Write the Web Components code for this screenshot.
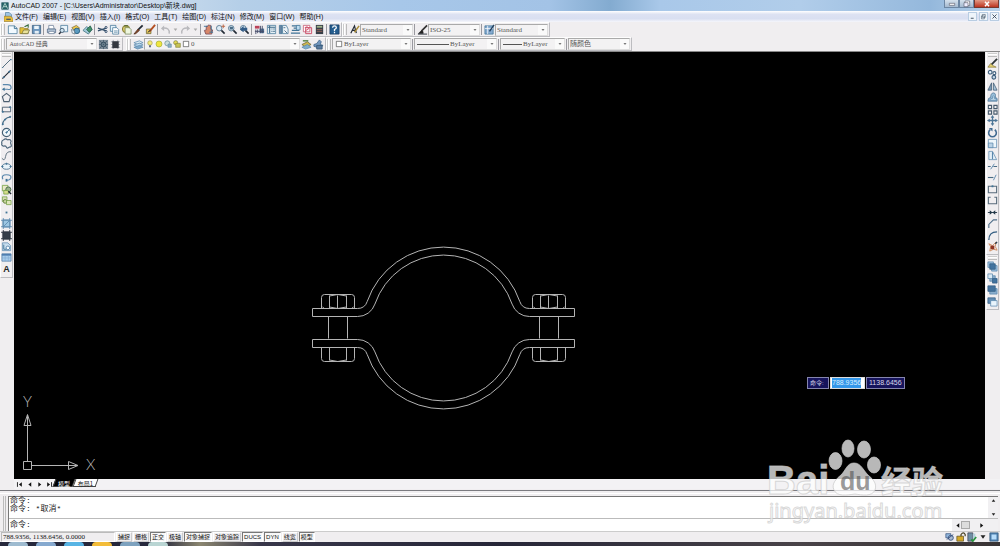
<!DOCTYPE html>
<html lang="zh-CN">
<head>
<meta charset="utf-8">
<title>AutoCAD 2007</title>
<style>
html,body{margin:0;height:100%}
body{font:7px/9px "Liberation Sans","Noto Sans CJK SC",sans-serif;color:#222;background:#f0eef0;overflow:hidden}
</style>
</head>
<body>
<cad-app></cad-app>
<script>
const define = (name, css, html, setup) => {
  const tpl = document.createElement('template');
  customElements.define(name, class extends HTMLElement {
    constructor() {
      super();
      tpl.innerHTML = `<style>*{box-sizing:border-box}button{font:inherit;color:inherit;background:none;border:0;padding:0;margin:0;display:flex;align-items:center;justify-content:center}:host([hidden]){display:none}${css}</style>` + (typeof html === 'function' ? '' : html);
      this.attachShadow({mode: 'open'}).append(tpl.content.cloneNode(true));
      if (typeof html === 'function') this.render = html;
    }
    connectedCallback() {
      if (this.render && !this.done) {
        const t = document.createElement('template');
        t.innerHTML = this.render(this);
        this.shadowRoot.append(t.content.cloneNode(true));
        this.done = true;
      }
      if (setup) setup(this);
    }
  });
};

/* Icon shapes on a 12 x 12 grid. p = stroked path, f = filled path. */
const p = (d, c = '#34506e', w = 1) => `<path d="${d}" fill="none" stroke="${c}" stroke-width="${w}"/>`;
const f = (d, c, s = 'none') => `<path d="${d}" fill="${c}" stroke="${s}" stroke-width=".8"/>`;
const o = (x, y, r, c = 'none', s = '#34506e', w = 1) => `<circle cx="${x}" cy="${y}" r="${r}" fill="${c}" stroke="${s}" stroke-width="${w}"/>`;
const B = '#3f7396', L = '#bfdcf0', Y = '#e6c238', G = '#6f9d3c', K = '#222a35', M = '#5b88ad';
const lens = o(4.6,4.6,3,'#dcebf5','#5c7c94') + p('M7 7l3.5 3.5', K, 1.8);
const icons = {
  new: f('M1.500 2h6.500l3 2.500v6h-9.500z','#f2f9ff',B) + p('M8 2v3h3',B),
  open: f('M1 4h4l1 1h4v5.500h-9z',Y,'#8b792c') + f('M3 10.500l2-4h6.500l-2 4z','#e9e29a','#6c6a3b') + p('M6 3l4-2v3','#356b3a',1.200),
  save: f('M1.500 1.500h9v9h-9z','#6b95bd','#35597c') + f('M3.500 2h5v3.500h-5z','#edf5fb') + f('M4 7.500h4.500v3h-4.500z','#e3edf5'),
  print: f('M3 1.500h5l1 4h-6z','#fff','#667894') + f('M1.500 5.500h9v4h-9z','#b7c7d9','#4d6482') + f('M3 8h6v2.500h-6z','#fff','#667894'),
  preview: f('M3 1.500h7.500v7h-7.500z','#e9f4fb',B) + o(4.500,7,2.300,'#cfe3ef','#465e75') + p('M3 9l-2 2',K,1.500),
  publish: f('M2 4l5-2.500 3.500 3-5 3z','#efc94c','#77652b') + o(7.500,7.500,3,'#5a9ac0','#285f80') + f('M1.500 6l3 1 1 4-3-1z','#e9f1f6','#647683'),
  sphere: f('M1 7l4-4 6 3-4 5z','#a3c9da','#386b77') + f('M5 6l4-4 2 4-3 3z','#43906c','#1e5943'),
  cut: p('M1 4.500l9 3M1 7.500l9-3','#35506b',1.200) + o(9.800,3.800,1.200) + o(9.800,8.200,1.200),
  copy: f('M1.500 1.500h6v6.500h-6z','#e7f3fb',B) + f('M4 4h4.500l2 2v5h-6.500z','#fff',B) + p('M5.500 7.500h4M5.500 9h4',B,.7),
  paste: o(5.500,5.500,4,'#dac96a','#77722e') + f('M4.500 4h4.500l2 2v5h-6.500z','#eef6df','#728257') + p('M3.500 2h4','#596b35',1.500),
  brush: p('M10.500 1.500l-5 5',K,2) + f('M5.500 5.500l1.500 1.500-4 3.500-2 .500z','#8a4e2c','#4c2b1d'),
  edit: f('M1.500 5.500h5v5h-5z','#e4c65c','#6b6333') + p('M11 1l-6 7','#b34e21',2) + p('M3 9l3-2',K,1),
  undo: p('M10 10.500q1-7-7.500-6','#b9b9bd',1.500) + f('M1 5l3.500-3.500v6z','#b9b9bd'),
  redo: p('M2 10.500q-1-7 7.500-6','#b9b9bd',1.500) + f('M11 5l-3.500-3.500v6z','#b9b9bd'),
  caret: f('M4 5h4l-2 2.500z','#aaa'),
  down: f('M3 4h6l-3 4z','#777'),
  pan: f('M3 11l-1.500-4 2-.500 0-4 1.500 0 1-1.500 1.500.500 1 0v4l2 1-1 4.500z','#d8876a','#6c4251') + p('M1 2.500h4M9 2v7M7 9h4',B,1),
  zoomrt: lens + p('M9 .500v4M7 2.500h4','#b86342',1),
  zoomwin: lens + f('M3 3h3.500v3h-3.500z','#4a6c86'),
  zoomprev: lens + f('M1 6l4-4v2h4v3h-4v2z','#345c87'),
  props: f('M1 2h5v3h-5z','#bb4259') + f('M6 5h5v5h-5z','#4e7193') + p('M2 6v5M4 6v4M7 2v8M9 2v8M1 8h10','#444a68',1),
  centre: f('M1.500 1.500h9v9h-9z','#e6f0f6',B) + p('M4 2v8M2 3.500h8M6 5.500h1M8 5.500h1.500M6 8h1M8 8h1.500','#3d6785',1.200),
  palette: f('M1.500 1.500h3v9h-3z','#6886a4',B) + f('M5 1.500h4l2 4v5h-6z','#edf3f7',B) + p('M6 4h2M7 7l3 3','#4b6e8a'),
  sheets: p('M2 2h8M4 4.500h7M2 7h8M1 10h10',B,1.200) + f('M7 1.500h4v5h-4z',L,B),
  markup: f('M1.500 1.500h7v7h-7z','#fff','#c34f69') + p('M4 4h6.500v6.500h-6.500zM3 4q3-2 4 0t-3 3','#cc4864'),
  calc: f('M2 1h8v10h-8z','#383f48') + f('M3 2h6v2h-6z','#9fb389') + p('M3 6h6M3 8h6','#a96c5d',.8),
  help: f('M1 1h10v10h-10z','#245d8e','#173a60') + p('M4 4q0-2 2-2t2 2q0 1-2 2v1.500M6 8.500v1.500','#fff',1.400),
  textstyle: p('M2 10l4-8 2 8M3 7h4',K,1.300) + p('M11 2l-5 7','#a88c38',1.600),
  dimstyle: p('M11 1.500l-6 6','#333',1.800) + f('M1 10.500l4-4 2 2v2z','#222') + p('M1 11h10',K,1),
  tablestyle: f('M1 2h9v9h-9z','#85aad0',B) + p('M1 5h9M4 2v9','#fff',.8) + p('M11 1l-5 7','#23405d',1.500),
  gear: f('M1 1h10v10h-10z','#7b8a97') + o(6,6,2.500,'#d7e3e8','#2e4658') + p('M6 1v10M1 6h10M2 2l8 8M10 2l-8 8','#3f5567',.8),
  workspace: p('M1 3h10M1 6h10M1 9h10M3.500 1v10M8.500 1v10','#8c939d',.8) + f('M2.500 2.500h7v7.500h-7z','#343840'),
  layers: f('M1 4l6-2 4 2-6 2z','#dcebf3',M) + f('M1 6.500l6-2 4 2-6 2z',L,M) + f('M1 9l6-2 4 2-6 2z','#7da8c9',M),
  bulb: o(6,4.500,3.400,'#f5ec7a','#a69d4a') + f('M4.500 8h3v3h-3z','#687184'),
  sun: o(6,6,4.500,'#f0e53e','#9eac37'),
  freeze: o(5,5,3.800,'#cbdedc','#63868f') + f('M6 6h5v5h-5z','#8eb0be',M),
  lock: o(4,4,3,'#e8dd54','#767c36') + f('M4 5h7v6h-7z','#c7c455','#76752e'),
  square: f('M2 2h8v8h-8z','#fff','#222'),
  layerprev: f('M1 6l6-3 4 3-6 3z','#d1b94a','#675f35') + f('M1 9l6-3 4 3-6 2z','#7eadc9',M) + p('M2 2h6','#4f7d3c',1.500),
  layerstate: f('M1 6l3-1 3-4 2 2-1 3 3 1-4 3-6-2z','#7196be','#375d84') + f('M4 7h6v4h-6z','#587a9f','#33526d'),
  line: p('M1.500 10.500l9-9','#486174',1) + f('M1 10h1.500v1h-1.500zM10 1h1.500v1.500h-1.500z',B),
  xline: p('M1.500 10.500l9-9',K,1.200) + o(3,9,.6,B,B) + o(9,3,.6,B,B),
  pline: p('M2 4h5q4 0 4 3t-4 2H2',M,1.300) + f('M1 9l3-2v4z',B),
  polygon: p('M6 1.500l4.500 3.500-1.700 5.500h-5.600l-1.700-5.500z','#4b5e70',1.200),
  rect: p('M1.500 3.500h9v5h-9z','#4b5e70') + o(2,8.500,.7,B,B) + o(10,3.500,.7,B,B),
  arc: p('M1.500 11q1-8 9-9','#4b6e86',1.200) + o(2,10,.6,B,B) + o(4.500,5,.6,B,B) + o(10,2,.6,B,B),
  circle: o(6,6,4.500,'#eff7fb','#425d72',1.200) + p('M6 6l3-3',B) + o(6,6,.7,B,B),
  cloud: p('M3 2q2-2 4 0 4-1 4 2-1 1 0 3 1 3-2 3-2 2-3 0-1-2-3-1-3-1-2-3-1-3 2-4z','#476176',1.200),
  spline: p('M1 9q3 4 4-2t6-5','#596b78'),
  ellipse: '<ellipse cx="6" cy="6" rx="4.500" ry="3" fill="#e8f3f9" stroke="#4f7391"/>' + o(6,3,.6,B,B) + o(1.500,6,.7,B,B) + o(10.500,6,.7,B,B),
  ellarc: p('M2 8q-2-5 4-5t4.500 4q-1 2-5 2',M,1.300) + f('M5 7.500h2v3h-2z',B),
  insert: f('M1.500 1.500h6v6h-6z','#e8e8c7',G) + o(8,6,2.800,'#9ab38b','#466846') + f('M3 7h5v4h-5z','#d5dc8c',G) + p('M8 8l3 3',K,1.500),
  block: f('M1.500 2h5v5h-5z','#d5ddb5',G) + o(4.500,7,2,'#c9d8a2','#617b3d') + f('M6 6h5v4.500h-5z','#dfe5bd',G),
  point: f('M5 5h2v2h-2z',B),
  hatch: f('M2 2h8v8h-8z','#9cc6e2',M) + p('M2.500 0v12M9.500 0v12M0 2.500h12M0 9.500h12M3 9l6-6',M,.9),
  gradient: f('M2 2h8v8h-8z','#343d49','#1e2835') + p('M2.500 0v12M9.500 0v12M0 2.500h12M0 9.500h12','#323b47',1),
  region: f('M1.500 2h6l3 3v5.500h-9z','#c9dfef',M) + o(7.500,7.500,2,'#f4faff',M) + p('M3 4v5h3',B),
  table: f('M1 2h10v8h-10z','#a8cdec','#517ba4') + f('M1 2h10v2h-10z','#4f7eb0') + p('M1 6.500h10M4.500 4v6M8 4v6','#7da6cf',.6),
  erase: p('M11 1l-7 7','#2e3436',2) + f('M1 10l3-4 2 2 4 2z','#e1cf73','#8f7e3a'),
  copyobj: o(3.500,3.500,2,'#eaf5fc','#3f5f7d',1.200) + o(8,4.500,1.600,'#fff','#3f5f7d',1.200) + o(7.500,9,2,'#c4d8e8','#3f5f7d',1.200),
  mirror: f('M5 2v8h-4z','#7c9cb7','#3b5670') + f('M7 2v8h4z','#a8c4d8','#3b5670'),
  offset: f('M1 10q0-4 3-4 0-5 3-5t2 5q3 0 2 4z','#9abfd9','#466f91') + f('M3 9q0-2 3-2 0-3 1-3t1 3h2v2z','#c9e0ee',M),
  array: p('M1.500 1.500h3.500v3.500h-3.500zM7.500 1.500h3.500v3.500h-3.500zM1.500 7.500h3.500v3.500h-3.500zM7.500 7.500h3.500v3.500h-3.500z','#46596b',1.200),
  move: p('M6 2v8M2 6h8','#4d7596',1.400) + f('M6 0l2 3h-4zM6 12l2-3h-4zM0 6l3-2v4zM12 6l-3-2v4z','#4d7596'),
  rotate: p('M3.500 3a4.200 4.200 0 1 0 5 0','#416a91',1.700) + f('M2 1h4v4z','#416a91'),
  scale: f('M1.500 1.500h9v9h-9z','#eef7fc',M) + f('M1.500 5.500h5v5h-5z','#b9d2e6',M),
  stretch: f('M2 10.500v-9h4l4.500 9z','#e3eff7',M) + p('M6 2v8',M,1.200),
  trim: p('M1 6h3M7 6h4','#486a83',1.200) + p('M4 9l4-6',M),
  extend: p('M1 6h6','#486a83',1.200) + p('M7 9l3-6',M),
  breakpt: p('M1.500 2.500h9v7h-9z','#586b7b',1.200) + f('M5 1.500h2v2h-2z',B),
  break: p('M4 2.500h-2.500v7h9v-7h-2.500','#586b7b',1.200),
  join: p('M1 6h10','#213747',1) + f('M6 6l-3-2.500v5zM6 6l3-2.500v5z','#213747'),
  chamfer: p('M2 11v-4l5-5h4','#4e6e88',1.200),
  fillet: p('M2 11q0-9 9-9','#355f83',1.400),
  explode: p('M2 3l4 2 4-4-1 5 2 4-4-1-4 2 1-5z','#d08a5c',1) + f('M4 5h4v4h-4z','#8d3424') + p('M9 3l2-2','#233d52',1.500),
  front: f('M1 1h6v6h-6z','#9fc2df',M) + f('M5 5h6v6h-6z','#9fc2df',M) + f('M3 3h6v6h-6z','#42739f','#335d84'),
  back: f('M3 3h6v6h-6z','#8cafcc',M) + f('M1 1h5v5h-5z','#d9e9f4',M) + f('M6 6h5v5h-5z','#42739f','#335d84'),
  above: f('M3 5h8v6h-8z','#8aaecd',M) + f('M1 2h8v6h-8z','#44739e','#335d84'),
  under: f('M1 2h8v6h-8z','#638eb5','#335d84') + f('M4 5h7v6h-7z','#e9f4fc',M),
  first: p('M2.500 2v8','#111',1.500) + f('M10 2v8l-5-4z','#111'),
  prev: f('M9 2v8l-5-4z','#111'),
  next: f('M4 2v8l5-4z','#111'),
  last: p('M9.500 2v8','#111',1.500) + f('M2 2v8l5-4z','#111'),
  up: f('M3 8h6l-3-4z','#222'),
  dn: f('M3 4h6l-3 4z','#222'),
  min: f('M2 5h8v3h-8z','#fff','#445'),
  max: f('M3 1.500h7v7h-7z','#fff','#445') + f('M1.500 4h6v6h-6z','#eef','#445'),
  close: p('M3 2.500l6 7M9 2.500l-6 7','#fff',2.200),
  mmin: p('M3 9h5','#345',1.500),
  mmax: p('M4 2.500h5v5h-5zM2.500 5h5v5h-5z','#456'),
  mclose: p('M2.500 2.500l7 7M9.500 2.500l-7 7','#345',1.500),
  app: f('M1 1h10v10h-10z','#27666a','#164b53') + p('M2 10l4-8 4 8M4 7h5','#c5e2db',1.200),
  doc: f('M2 0h5l3 3v5h-8z','#9ec4e4',B) + f('M0 5h9l3 3v4h-12z','#e8bd3b','#8f7429') + p('M3 9h6','#2f4766',1.500),
  comm: f('M1 2h6v5h-6z','#91b4da','#2f4b79') + o(7,7,3,'#aabbd0','#2f4b79') + p('M2 9l8-6','#2f4b79'),
  unlock: p('M6 6v-3q3-4 5 0v2','#443d1d',1.400) + f('M1 5h8v6h-8z','#d5a929','#544821'),
  tray: f('M1 1h6v10h-6z','#6e8fa4','#334') + f('M7 2h3v6h-3z','#b5d2dd') + p('M5 9l2 2 4-5','#28953d',2),
  clean: f('M1 1h10v10h-10z','#4e80b0','#315778') + f('M3 3h6v6h-6z','#b7ddfb'),
};

define('cad-icon', `:host{display:block;width:10px;height:10px;flex:none}svg{display:block;width:100%;height:100%}`,
  el => `<svg viewBox="0 0 12 12" aria-hidden="true">${icons[el.getAttribute('name')]}</svg>`);

/* A push button holding one icon. */
define('tool-button', `:host{display:block;flex:none;width:var(--tool-w,12px);height:var(--tool-h,12px)}
  :host([small]){width:8px}button{width:100%;height:100%}cad-icon{width:11px;height:11px}`,
  el => `<button type="button" aria-label="${el.getAttribute('name')}"><cad-icon name="${el.getAttribute('name')}"></cad-icon></button>`);

const tools = names => names.split(' ').map(n => n === '|' ? '<i></i>' : `<tool-button name="${n}"${n === 'caret' ? ' small' : ''}></tool-button>`).join('');

/* Dockable toolbar: a grip, then a run of tools and combo boxes. */
define('tool-bar', `:host{display:flex;align-items:center;height:15px;flex:none;border:1px solid;border-color:#fdfdfd #bcbcc0 #bcbcc0 #fdfdfd;padding-right:1px}
  .grip{width:3px;height:11px;margin:0 1px;flex:none;border:1px solid;border-color:#fff #bbb #bbb #fff;border-width:0 1px;box-shadow:-1px 0 #ccc}
  :host([vertical]){flex-direction:column;width:13px;height:auto;padding:0 0 2px;border-top-width:0}
  :host([vertical]) .grip{width:9px;height:3px;margin:2px 0 0;border-width:1px 0;box-shadow:0 -1px #ccc}
  :host([vertical]) .run{flex-direction:column;height:var(--run);justify-content:space-between;margin-top:1px}
  .run{display:flex;align-items:center}
  i{width:1px;height:11px;margin:0 1px;background:#99999f}`,
  el => `<span class="grip"></span><div class="run">${el.hasAttribute('tools') ? tools(el.getAttribute('tools')) : ''}<slot></slot></div>`);

define('bar-split', `:host{display:block;width:1px;height:11px;margin:0 1px;background:#99999f;flex:none}`, '');

/* Combo box with optional swatches before the value. */
define('combo-box', `:host{display:flex;align-items:center;height:12px;flex:none;width:var(--w);background:#f3f2f3;border:1px solid;border-color:#aaa #ddd #ddd #aaa;color:#555}
  select{appearance:none;flex:1;min-width:0;height:10px;border:0;background:none;padding:0 0 0 1px;margin:0;color:inherit;font:7px/10px "Liberation Serif","Noto Sans CJK SC",serif;text-overflow:clip}
  :host([compact]) select{font-size:6px}
  span{display:flex;width:9px;height:10px;background:#fafafa;align-items:center;justify-content:center;flex:none}
  span cad-icon{width:6px;height:6px}`,
  el => `<slot></slot><select aria-label="${el.getAttribute('label')}"><option>${el.getAttribute('value')}</option></select><span><cad-icon name="down"></cad-icon></span>`);

define('title-bar', `:host{display:flex;height:11px;flex:none;align-items:center;padding-left:1px;gap:2px;color:#111;font:7px/10px "Liberation Sans","Noto Sans CJK SC",sans-serif;
    background:linear-gradient(90deg,#e3ecf5 0,#cfdeee 14%,#b5cfe8 24%,#a7c7e9 40%,#a3c3e6 55%,#83abd0 61%,#a9c8e9 66%,#b1cdea 80%,#94b8dc 93%,#b9d2ea)}
  cad-icon{width:8px;height:8px}h1{font:inherit;margin:0;flex:1;white-space:nowrap}
  div{display:flex;align-self:flex-start;height:8px;margin-right:1px}
  button{width:15px;height:8px;border:1px solid #6c86a3;border-top:0;background:linear-gradient(#d5e1ed,#a5bad0)}
  .x{width:25px;background:linear-gradient(#e29a86,#bd3420);border-color:#76392f}`,
  `<cad-icon name="app"></cad-icon><h1>AutoCAD 2007 - [C:\\Users\\Administrator\\Desktop\\新块.dwg]</h1>
  <div><button aria-label="最小化"><cad-icon name="min"></cad-icon></button><button aria-label="还原"><cad-icon name="max"></cad-icon></button><button class="x" aria-label="关闭"><cad-icon name="close"></cad-icon></button></div>`);

define('menu-bar', `:host{display:flex;height:11px;flex:none;align-items:center;padding:0 1px 0 4px;background:linear-gradient(#fff,#dde2f2 30%,#d9dff1 70%,#f5f6fb);color:#111}
  nav{display:flex;gap:5px;flex:1;margin-left:2px}nav button{white-space:nowrap;line-height:10px}
  cad-icon{width:9px;height:10px}.mdi{display:flex;gap:2px}.mdi button{width:9px;height:9px;border:1px solid #b9cde2;background:#eef4fa}.mdi cad-icon{width:7px;height:7px}`,
  `<cad-icon name="doc"></cad-icon><nav>${['文件(F)','编辑(E)','视图(V)','插入(I)','格式(O)','工具(T)','绘图(D)','标注(N)','修改(M)','窗口(W)','帮助(H)'].map(t => `<button type="button">${t}</button>`).join('')}</nav>
  <div class="mdi"><button aria-label="最小化"><cad-icon name="mmin"></cad-icon></button><button aria-label="还原"><cad-icon name="mmax"></cad-icon></button><button aria-label="关闭"><cad-icon name="mclose"></cad-icon></button></div>`);

/* Model space: pipe clamp, UCS symbol and the dynamic input at the cursor. */
const head = x => `<path d="M${x} 308.500v-11q0-3 3-3h27q3 0 3 3v11M${x+8} 308.500v-13M${x+16} 308.500v-13M${x+25} 308.500v-13M${x+8} 296q8-3 17 0M${x+8} 307q8 3 17 0M${x+1} 307l2 1.500M${x+32} 307l-2 1.500"/>
  <path d="M${x} 347.500v11q0 3 3 3h27q3 0 3-3v-11M${x+8} 347.500v13M${x+25} 347.500v13M${x+8} 360q8 3 17 0M${x+7} 316.500v22M${x+26} 316.500v22"/>`;
const half = 'M312.500 308.500H357.500A10.200 10.200 0 0 0 367.200 301.500A80.700 80.700 0 0 1 519.800 301.500A10.200 10.200 0 0 0 529.500 308.500H574.500V316.500H529.500A18.200 18.200 0 0 1 512.100 304.100A72.500 72.500 0 0 0 374.900 304.100A18.200 18.200 0 0 1 357.500 316.500H312.500Z';
define('model-space', `:host{display:block;position:relative;overflow:hidden;background:#000;flex:1;min-width:0}
  svg{position:absolute;left:0;top:0;width:971px;height:427px}
  .lines{fill:none;stroke:#b4b4b4;stroke-width:1}
  text{font:300 15px Lato,sans-serif;fill:#bbb}
  form{position:absolute;left:793px;top:325px;display:flex;gap:1px;font:7px/10px "Liberation Sans","Noto Sans CJK SC",sans-serif;color:#d8d8ea}
  label,.y,.x{height:12px;border:1px solid #8585ae;background:#16145c;display:block}
  label{width:22px;padding-left:2px;font-size:6px}.x{background:#fff;width:35px;padding:0 0 0 1px;border-color:#ddd}.y{width:39px}
  input{display:block;border:0;margin:0;padding:0;height:10px;font:inherit;color:#d9efff;background:#3598ea;width:29px}
  .y input{background:none;width:37px;padding-left:2px;color:#d8d8ea}`,
  `<svg viewBox="14 52 971 427" role="img" aria-label="管夹图形"><g class="lines"><path d="${half}"/><path d="${half}" transform="matrix(1 0 0 -1 0 656)"/>${head(321.5)}${head(532.5)}
  <path d="M23.500 461.500h8v8h-8zM27.500 461V415M24 425.500h7l-3.500-11zM27.500 415v10M32 465.500h45M68.500 461.500v8l9.500-4z"/></g><text x="23" y="407">Y</text><text x="86" y="470">X</text></svg>
  <form><label for="dx">命令:</label><div class="x"><input id="dx" value="788.9356"></div><div class="y"><input aria-label="Y" value="1138.6456"></div></form>`);

define('layout-tabs', `:host{display:flex;height:10px;flex:none;margin-left:14px;align-items:center;background:#f3f2f4}
  .nav button{width:10px;height:8px}.nav{display:flex}.nav cad-icon{width:7px;height:7px}
  .tab{position:relative;height:9px;width:23px;align-self:flex-start;font:6px/8px "Noto Sans CJK SC",sans-serif}
  .tab::before{content:"";position:absolute;inset:0 0 1px;background:#fff;border:solid #444;border-width:0 1px 1px;transform:skewX(-20deg)}
  .tab span{position:relative}.on{color:#fff;width:20px}.on::before{background:#000}`,
  `<div class="nav">${['first','prev','next','last'].map(n => `<button aria-label="${n}"><cad-icon name="${n}"></cad-icon></button>`).join('')}</div>
  <button class="tab on"><span>模型</span></button><button class="tab"><span>布局1</span></button>`);

define('command-window', `:host{display:flex;height:37px;flex:none;padding:2px 2px 0 3px;gap:2px}
  .grip{width:3px;border:solid #bbb;border-width:0 1px}
  .pane{flex:1;display:flex;flex-direction:column;border:solid #777;border-width:1px 0 0 1px;background:#fff;font:8px/8px "Liberation Mono","Noto Sans CJK SC",monospace;color:#222}
  .log{height:22px;display:flex;border-bottom:1px solid #bbb}.log div{flex:1;padding-left:1px}
  p{margin:0;white-space:pre}
  .vs{width:10px;background:#f1f0f2;display:flex;flex-direction:column;justify-content:space-between;align-items:center}
  .line{display:flex;flex:1;align-items:center;padding-left:1px}
  label{width:22px;white-space:nowrap}input{flex:1;height:9px;min-width:0;border:0;padding:0;background:none;font:inherit}
  .hs{display:flex;align-items:center;width:46px;height:100%;background:#f1f0f2;flex:none;padding-left:2px}
  .hs b{width:9px;height:8px;border:1px solid #aaa;background:#ddd}.hs .r{margin-left:8px}
  button cad-icon{width:7px;height:7px}`,
  `<span class="grip"></span><div class="pane"><div class="log"><div><p>命令:</p><p>命令: *取消*</p></div><span class="vs"><button aria-label="上"><cad-icon name="up"></cad-icon></button><button aria-label="下"><cad-icon name="dn"></cad-icon></button></span></div>
  <div class="line"><label for="cmd">命令:</label><input id="cmd"><span class="hs"><button aria-label="左"><cad-icon name="prev"></cad-icon></button><b></b><button class="r" aria-label="右"><cad-icon name="next"></cad-icon></button></span></div></div>`);

define('status-bar', `:host{display:flex;height:11px;flex:none;align-items:center;padding:0 1px;border-top:1px solid #ccc;color:#111}
  output{width:114px;height:10px;border:1px solid;border-color:#bbb #fff #fff #bbb;padding-left:1px;font:7px/8px "Liberation Serif",serif}
  .modes{display:flex;gap:1px;margin-left:1px;font:6px/8px "Liberation Sans","Noto Sans CJK SC",sans-serif}
  .modes button{height:10px;border:1px solid;border-color:#fff #ccc #ccc #fff;padding:0 1px;white-space:nowrap}
  .modes button.on{border-color:#777 #fff #fff #777;background:#f8f8f8}
  .tray{margin-left:auto;display:flex;gap:1px}`,
  `<output>788.9356, 1138.6456, 0.0000</output><div class="modes">${['捕捉','栅格','正交*','极轴','对象捕捉*','对象追踪','DUCS*','DYN*','线宽','模型*'].map(t => `<button type="button"${t.endsWith('*') ? ' class="on"' : ''}>${t.replace('*','')}</button>`).join('')}</div>
  <div class="tray">${['comm','unlock','tray','dn','clean'].map(n => `<cad-icon name="${n}"></cad-icon>`).join('')}</div>`);

define('task-strip', `:host{display:flex;height:4px;flex:none;overflow:hidden;background:linear-gradient(90deg,#26283c 0,#26283c 16%,#8b8670 20%,#38374a 26%,#262638 50%,#494348 80%,#393435)}
  i{width:20px;margin-left:8px;border-radius:10px 10px 0 0;background:var(--c)}`,
  `${['#9ebbd0','#86a9cf','#58b4e4','#f3bc38','#7da2bf','#b9d5d3'].map(c => `<i style="--c:${c}"></i>`).join('')}`);

define('page-mark', `:host{position:absolute;right:50px;bottom:18px;width:185px;height:90px;pointer-events:none}
  svg{width:100%;height:100%;overflow:visible}
  g{fill:#fff;fill-opacity:.72;stroke:#c8c8c8;stroke-opacity:.7;stroke-width:1}
  .w{font:bold 40px "Liberation Sans",sans-serif}.c{font:bold 31px "Noto Sans CJK SC",sans-serif}.u{font:20px "Noto Sans",sans-serif}
  .d{font:bold 25px "Liberation Sans",sans-serif;fill:#444;fill-opacity:.55;stroke:none}`,
  `<svg viewBox="765 438 185 90"><g><text class="w" x="767" y="494">Bai</text><ellipse cx="835.500" cy="461" rx="6.500" ry="8.500"/><ellipse cx="848" cy="448.500" rx="6" ry="8.500"/><ellipse cx="864" cy="449.500" rx="6.500" ry="8.500"/><ellipse cx="874" cy="465" rx="6.500" ry="8"/>
  <path d="M854 463c7 0 9 7 14 12 6 5 9 9 7 15-3 7-13 5-20 4-8 1-18 3-21-4-3-6 2-11 7-15 5-5 6-12 13-12z"/><text class="c" x="881" y="493">经验</text><text class="u" x="769" y="518">jingyan.baidu.com</text><text class="d" x="840" y="490">du</text></g></svg>`);

define('cad-app', `:host{display:flex;flex-direction:column;height:100vh;position:relative;background:#f0eef0}
  .row{display:flex;height:15px;flex:none}.row.b{border-bottom:1px solid #888}
  main{display:flex;flex:1;min-height:0}
  aside{width:14px;flex:none}
  aside.r{width:15px;padding-left:1px}
  .split{height:5px;flex:none;border-bottom:1px solid #fff;border-top:1px solid #f0eef0}
  .split::before{content:"";display:block;height:1px;background:#7b7b80}
  .lead{display:flex;gap:1px;margin-left:1px;align-items:center}.lead cad-icon,.sw{width:8px;height:8px}
  .sw{margin-left:2px}.ln{height:1px;background:#555;margin-left:2px;width:32px}.ln.s{width:19px}
  tool-bar[vertical]{--tool-w:11px;--tool-h:11px}
  .fill{height:14px}`,
  `<title-bar></title-bar><menu-bar></menu-bar>
  <div class="row"><tool-bar tools="new open save | print preview publish sphere | cut copy paste brush edit | undo caret redo caret | pan zoomrt zoomwin zoomprev | props centre palette sheets markup calc | help"></tool-bar>
  <tool-bar><tool-button name="textstyle"></tool-button><combo-box style="--w:53px" label="文字样式" value="Standard"></combo-box><bar-split></bar-split><tool-button name="dimstyle"></tool-button><combo-box style="--w:52px" label="标注样式" value="ISO-25"></combo-box><bar-split></bar-split><tool-button name="tablestyle"></tool-button><combo-box style="--w:53px" label="表格样式" value="Standard"></combo-box></tool-bar></div>
  <div class="row b"><tool-bar class="fill"><combo-box compact style="--w:91px" label="工作空间" value="&nbsp;AutoCAD 经典"></combo-box><tool-button name="gear"></tool-button><tool-button name="workspace"></tool-button></tool-bar>
  <tool-bar class="fill" style="margin-left:3px"><tool-button name="layers"></tool-button><combo-box style="--w:156px" label="图层" value="0"><span class="lead"><cad-icon name="bulb"></cad-icon><cad-icon name="sun"></cad-icon><cad-icon name="freeze"></cad-icon><cad-icon name="lock"></cad-icon><cad-icon name="square"></cad-icon></span></combo-box><tool-button name="layerprev"></tool-button><tool-button name="layerstate"></tool-button></tool-bar>
  <tool-bar class="fill"><combo-box style="--w:79px" label="颜色" value="ByLayer"><cad-icon class="sw" name="square"></cad-icon></combo-box><bar-split></bar-split><combo-box style="--w:83px" label="线型" value="ByLayer"><span class="ln"></span></combo-box><bar-split></bar-split><combo-box style="--w:65px" label="线宽" value="ByLayer"><span class="ln s"></span></combo-box><bar-split></bar-split><combo-box style="--w:62px" label="打印样式" value="随颜色"></combo-box></tool-bar></div>
  <main><aside><tool-bar vertical style="--run:217px" tools="line xline pline polygon rect arc circle cloud spline ellipse ellarc insert block point hatch gradient region table"><button type="button" aria-label="多行文字" style="font:bold 9px/11px 'Liberation Sans',sans-serif;border:0;background:none;padding:0;height:11px;color:#222">A</button></tool-bar></aside>
  <model-space></model-space>
  <aside class="r"><tool-bar vertical style="--run:194px" tools="erase copyobj mirror offset array move rotate scale stretch trim extend breakpt break join chamfer fillet explode"></tool-bar><tool-bar vertical style="--run:46px" tools="front back above under"></tool-bar></aside></main>
  <layout-tabs></layout-tabs><div class="split"></div><command-window></command-window><status-bar></status-bar><task-strip></task-strip><page-mark></page-mark>`);
</script>
</body>
</html>
